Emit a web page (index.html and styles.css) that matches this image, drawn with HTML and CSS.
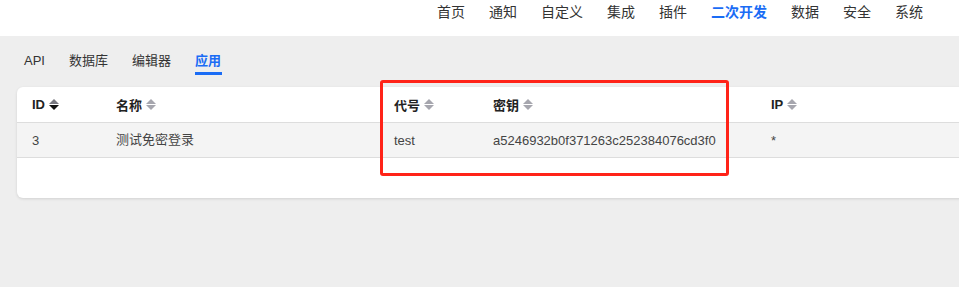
FILE: index.html
```html
<!DOCTYPE html>
<html lang="zh-CN">
<head>
    <meta charset="UTF-8">
    <title>二次开发 - 应用</title>
    <link rel="stylesheet" href="styles.css">
</head>
<body>
    <div class="topbar">
        <nav class="menu">
            <a>首页</a>
            <a>通知</a>
            <a>自定义</a>
            <a>集成</a>
            <a>插件</a>
            <a class="active">二次开发</a>
            <a>数据</a>
            <a>安全</a>
            <a>系统</a>
        </nav>
    </div>

    <div class="tabs">
        <span class="tab">API</span>
        <span class="tab">数据库</span>
        <span class="tab">编辑器</span>
        <span class="tab active">应用</span>
    </div>

    <div class="card">
        <div class="row head">
            <div class="cell">ID <span class="sort desc"><i class="up"></i><i class="down"></i></span></div>
            <div class="cell">名称 <span class="sort"><i class="up"></i><i class="down"></i></span></div>
            <div class="cell">代号 <span class="sort"><i class="up"></i><i class="down"></i></span></div>
            <div class="cell">密钥 <span class="sort"><i class="up"></i><i class="down"></i></span></div>
            <div class="cell">IP <span class="sort"><i class="up"></i><i class="down"></i></span></div>
        </div>
        <div class="row body">
            <div class="cell">3</div>
            <div class="cell cjk">测试免密登录</div>
            <div class="cell">test</div>
            <div class="cell">a5246932b0f371263c252384076cd3f0</div>
            <div class="cell">*</div>
        </div>
        <div class="empty"></div>
    </div>

    <!-- annotation box drawn over the screenshot -->
    <div class="mark"></div>
</body>
</html>
```

FILE: styles.css
```css
html, body {
    margin: 0;
    padding: 0;
}

body {
    font-family: "Liberation Sans", "Noto Sans CJK SC", sans-serif;
    background-color: #eeeeee;
    color: #333;
    width: 959px;
    height: 287px;
    overflow: hidden;
    position: relative;
}

.topbar {
    background-color: #fff;
    height: 36px;
}

.menu {
    display: flex;
    justify-content: flex-end;
    gap: 24px;
    padding: 3px 36px 0 0;
    font-size: 14px;
    line-height: 18px;
}

.menu a {
    color: #333;
}

.menu a.active {
    color: #1a6cf5;
    font-weight: bold;
}

.tabs {
    display: flex;
    gap: 24px;
    padding: 16px 0 0 24px;
    font-size: 13px;
    line-height: 17px;
    height: 34px;
    box-sizing: border-box;
    margin-bottom: 17px;
}

.tab {
    color: #333;
    height: 23px;
    box-sizing: border-box;
    position: relative;
}

.tab.active {
    color: #1a6cf5;
    font-weight: bold;
}

.tab.active::after {
    content: "";
    position: absolute;
    left: 0;
    right: -1px;
    top: 20px;
    height: 3px;
    background-color: #1a6cf5;
}

.card {
    background-color: #fff;
    margin-left: 17px;
    margin-right: -20px;
    border-radius: 6px;
    box-shadow: 0 1px 3px rgba(0, 0, 0, 0.12);
    height: 111px;
}

.row {
    display: grid;
    grid-template-columns: 84px 278px 99px 278px 1fr;
    padding-left: 15px;
    font-size: 13px;
    align-items: center;
    border-bottom: 1px solid #dddddd;
}

.row.head {
    height: 35px;
    font-weight: bold;
    color: #222;
}

.row.body {
    height: 34px;
    background-color: #f4f4f4;
    color: #444;
}

.cell {
    display: flex;
    align-items: center;
    gap: 4px;
}

.cell.cjk {
    margin-top: -3px;
}

.sort {
    display: inline-flex;
    flex-direction: column;
    gap: 1px;
}

.sort i {
    display: block;
    width: 0;
    height: 0;
    border-left: 5px solid transparent;
    border-right: 5px solid transparent;
}

.sort .up {
    border-bottom: 5px solid #a6a6ae;
}

.sort .down {
    border-top: 5px solid #a6a6ae;
}

.sort.desc .up {
    border-bottom-color: #77777f;
}

.sort.desc .down {
    border-top-color: #111;
}

.mark {
    position: absolute;
    left: 380px;
    top: 80px;
    width: 343px;
    height: 90px;
    border: 3px solid #ff2318;
    border-radius: 3px;
}
```
